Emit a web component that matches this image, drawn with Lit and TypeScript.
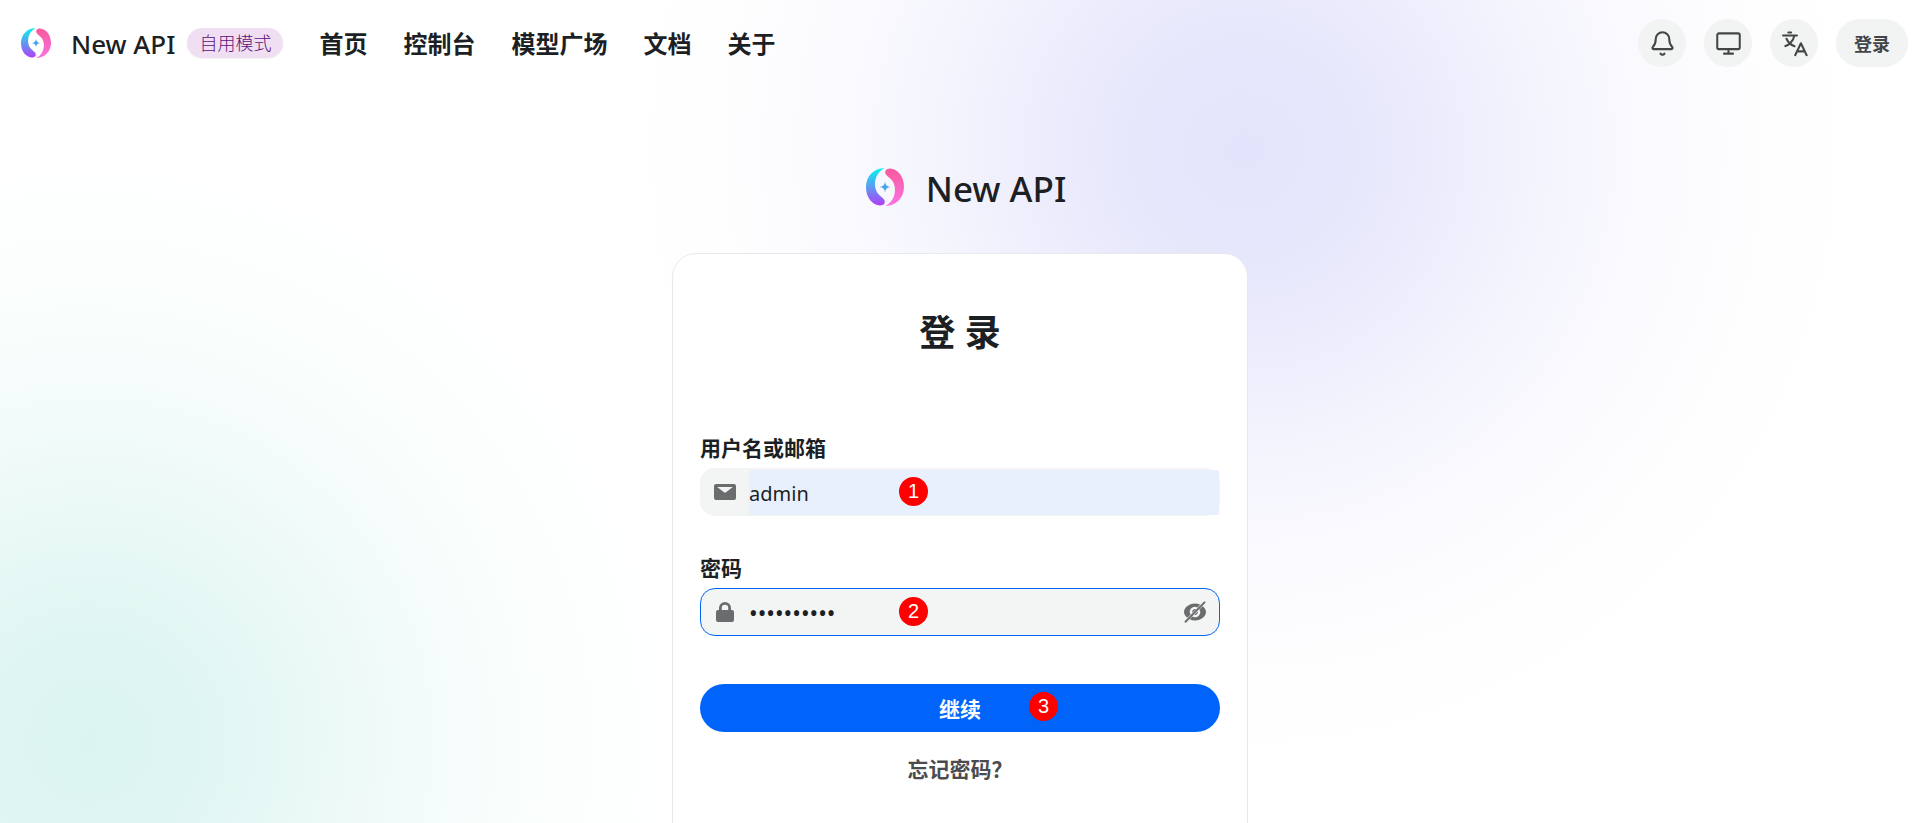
import { LitElement, html, css, svg } from "lit";
import { customElement, property, state } from "lit/decorators.js";

const base = css`
  *,
  *::before,
  *::after {
    box-sizing: border-box;
  }
  button,
  input {
    font: inherit;
    color: inherit;
    border: 0;
    margin: 0;
    padding: 0;
    background: none;
    outline: none;
  }
  button {
    cursor: pointer;
  }
  a {
    color: inherit;
    text-decoration: none;
  }
  svg {
    display: block;
  }
`;

@customElement("brand-logo")
export class BrandLogo extends LitElement {
  static styles = [
    base,
    css`
      :host {
        display: block;
        flex: none;
      }
      .mark {
        width: 100%;
        height: 100%;
      }
    `,
  ];

  render() {
    const blade =
      "M18.500 0C8 0 0 8.500 0 19C0 30 6.500 37 14 37.500C18 37.500 20 34.500 18 31.500C15.500 28 9 26 9 16.500C9 8.500 13 3 18.500 0Z";
    return html`<svg class="mark" viewBox="0 0 38 38" aria-hidden="true">
      <defs>
        <linearGradient id="cool" x1="0.6" y1="0" x2="0.6" y2="1">
          <stop offset="0" stop-color="#08f4ee" />
          <stop offset="0.5" stop-color="#5a9cf0" />
          <stop offset="1" stop-color="#b43cf8" />
        </linearGradient>
        <linearGradient id="warm" x1="0.5" y1="1" x2="0.5" y2="0">
          <stop offset="0" stop-color="#f75a9c" />
          <stop offset="1" stop-color="#fb72e2" />
        </linearGradient>
      </defs>
      <path fill="url(#cool)" d=${blade} />
      <path fill="url(#warm)" d=${blade} transform="rotate(180 19 19)" />
      <path
        fill="#4aa3ee"
        d="M19 13.500Q19.400 18.600 24.500 19Q19.400 19.400 19 24.500Q18.600 19.400 13.500 19Q18.600 18.600 19 13.500Z"
      />
    </svg>`;
  }
}

const bell = svg`<path d="M10.268 21a2 2 0 0 0 3.464 0" /><path d="M3.262 15.326A1 1 0 0 0 4 17h16a1 1 0 0 0 .74-1.673C19.410 13.956 18 12.499 18 8A6 6 0 0 0 6 8c0 4.499-1.411 5.956-2.738 7.326" />`;
const monitor = svg`<rect x="2" y="3" width="20" height="14" rx="1.5" /><path d="M12 17v4M8 21h8" />`;
const translate = svg`<path d="M6.500 2.300h2.500M1.800 4.900h12.400M11.800 5.200C11 9.300 7.500 13.200 3.900 14.300M4.900 7.800C6.300 11 8.800 13.300 12 14.500M12.600 22.400L17.700 11.800L22.800 22.400M14.200 19h7" />`;

@customElement("site-header")
export class SiteHeader extends LitElement {
  static styles = [
    base,
    css`
      :host {
        display: block;
      }
      .bar {
        display: flex;
        align-items: center;
        height: 86px;
        padding: 0 5px 0 21px;
      }
      .home {
        display: flex;
        align-items: center;
      }
      .logo {
        width: 30px;
        height: 30px;
        margin-right: 20px;
      }
      .name {
        font-size: 26px;
        line-height: 36px;
        font-weight: 500;
        padding-top: 2px;
      }
      .mode {
        margin-left: 12px;
        height: 30px;
        padding: 0 12px;
        border-radius: 15px;
        background: #f0dff3;
        color: #5c0f78;
        font-size: 18px;
        line-height: 30px;
        font-weight: 300;
        box-shadow: 0 1px 2px rgba(0, 0, 0, 0.06);
      }
      .nav {
        display: flex;
        gap: 36px;
        margin-left: 36px;
        padding-top: 2px;
        font-size: 24px;
        line-height: 36px;
        font-weight: 700;
      }
      .tools {
        display: flex;
        gap: 18px;
        margin-left: auto;
      }
      .tool {
        display: grid;
        place-items: center;
        min-width: 48px;
        height: 48px;
        border-radius: 24px;
        background: #f2f3f3;
        color: #444547;
      }
      .wide {
        padding: 0 18px;
        font-size: 18px;
        font-weight: 700;
      }
      .icon {
        width: 27px;
        height: 27px;
        fill: none;
        stroke: currentColor;
        stroke-width: 1.8;
        stroke-linecap: round;
        stroke-linejoin: round;
      }
    `,
  ];

  private links = ["首页", "控制台", "模型广场", "文档", "关于"];
  private tools = [
    { label: "通知", icon: bell },
    { label: "主题", icon: monitor },
    { label: "语言", icon: translate },
  ];

  render() {
    return html`<header class="bar">
      <a class="home" href="#">
        <brand-logo class="logo"></brand-logo>
        <span class="name">New API</span>
      </a>
      <span class="mode">自用模式</span>
      <nav class="nav">${this.links.map((l) => html`<a href="#">${l}</a>`)}</nav>
      <div class="tools">
        ${this.tools.map(
          (t) => html`<button class="tool" type="button" aria-label=${t.label}>
            <svg class="icon" viewBox="0 0 24 24">${t.icon}</svg>
          </button>`
        )}
        <button class="tool wide" type="button">登录</button>
      </div>
    </header>`;
  }
}

@customElement("step-mark")
export class StepMark extends LitElement {
  @property() n = "";
  static styles = css`
    :host {
      display: block;
      width: 29px;
      height: 29px;
      border-radius: 50%;
      background: #ff0000;
      color: #ffffff;
      font: 400 20px/29px "Liberation Sans", Arial, sans-serif;
      text-align: center;
    }
  `;
  render() {
    return html`${this.n}`;
  }
}

@customElement("login-card")
export class LoginCard extends LitElement {
  @state() private reveal = false;

  static styles = [
    base,
    css`
      :host {
        display: block;
        width: 100%;
        max-width: 576px;
      }
      .card {
        border: 1px solid #e8e9ea;
        border-radius: 24px;
        background: #ffffff;
        padding: 55px 27px 96px;
      }
      .title {
        margin: 0 0 76px;
        font-size: 36px;
        line-height: 48px;
        font-weight: 700;
        text-align: center;
      }
      .form {
        display: flex;
        flex-direction: column;
        font-size: 21px;
        line-height: 30px;
      }
      .field {
        display: flex;
        flex-direction: column;
        gap: 5px;
        margin-bottom: 37px;
      }
      .label {
        font-weight: 700;
      }
      .box {
        position: relative;
        display: flex;
        align-items: center;
        height: 48px;
        border: 1px solid transparent;
        border-radius: 15px;
        background: #f3f4f4;
      }
      .box.focus {
        border-color: #0064fa;
      }
      .lead {
        flex: none;
        display: grid;
        place-items: center;
        width: 48px;
        color: #6b6c6e;
      }
      .glyph {
        width: 24px;
        height: 24px;
        fill: currentColor;
      }
      .input {
        flex: 1;
        min-width: 0;
        height: 100%;
        padding-top: 2px;
        color: #1c1f23;
        font-size: 23px;
      }
      .input.filled {
        background: #e8f0fe;
        height: 45px;
        font-size: 20px;
      }
      .eye {
        flex: none;
        display: grid;
        place-items: center;
        width: 48px;
        height: 100%;
        color: #6b6c6e;
      }
      .step {
        position: absolute;
        top: 8px;
        left: 198px;
      }
      .submit {
        position: relative;
        height: 48px;
        margin-top: 11px;
        padding-top: 2px;
        border-radius: 24px;
        background: #0064fa;
        color: #ffffff;
        font-weight: 700;
      }
      .submit .step {
        left: 329px;
      }
      .forgot {
        align-self: center;
        margin-top: 22px;
        color: #4b4c4e;
        font-weight: 700;
      }
    `,
  ];

  render() {
    return html`<section class="card">
      <h1 class="title">登 录</h1>
      <form class="form" @submit=${(e: Event) => e.preventDefault()}>
        <div class="field">
          <label class="label" for="user">用户名或邮箱</label>
          <div class="box">
            <span class="lead">
              <svg class="glyph" viewBox="0 0 24 24" aria-hidden="true">
                <path
                  fill-rule="evenodd"
                  d="M3 4H21A2 2 0 0 1 23 6V18A2 2 0 0 1 21 20H3A2 2 0 0 1 1 18V6A2 2 0 0 1 3 4ZM4.200 7L11 12.200Q12 12.900 13 12.200L19.800 7Z"
                />
              </svg>
            </span>
            <input class="input filled" id="user" type="text" .value=${"admin"} />
            <step-mark class="step" n="1"></step-mark>
          </div>
        </div>
        <div class="field">
          <label class="label" for="pass">密码</label>
          <div class="box focus">
            <span class="lead">
              <svg class="glyph" viewBox="0 0 24 24" aria-hidden="true">
                <path
                  fill-rule="evenodd"
                  d="M6 10V8A6 6 0 0 1 18 8V10H19A2 2 0 0 1 21 12V20A2 2 0 0 1 19 22H5A2 2 0 0 1 3 20V12A2 2 0 0 1 5 10ZM8.800 10H15.200V8A3.200 3.200 0 0 0 8.800 8Z"
                />
              </svg>
            </span>
            <input
              class="input"
              id="pass"
              type=${this.reveal ? "text" : "password"}
              .value=${"admin12345"}
            />
            <button
              class="eye"
              type="button"
              aria-label="显示密码"
              @click=${() => (this.reveal = !this.reveal)}
            >
              <svg class="glyph" viewBox="0 0 24 24" aria-hidden="true">
                <path
                  d="M15.600 3.900A13 13 0 0 0 12 3.500C5.500 3.500 1 8 1 12C1 14 2.200 16.200 4.300 17.800L7.600 14.500A5 5 0 0 1 14.500 7.600L17.200 4.600ZM19.700 6.200L16.400 9.500A5 5 0 0 1 9.500 16.400L6.700 19.200A13 13 0 0 0 12 20.500C18.500 20.500 23 16 23 12C23 10 21.800 7.800 19.700 6.200Z"
                />
                <path d="M9.300 12.800A2.800 2.800 0 0 1 12.900 9.300ZM14.800 11.400A2.800 2.800 0 0 1 11.400 14.800Z" />
                <path
                  d="M2.500 21.800L21.500 2.400"
                  stroke="currentColor"
                  stroke-width="2"
                  stroke-linecap="round"
                />
              </svg>
            </button>
            <step-mark class="step" n="2"></step-mark>
          </div>
        </div>
        <button class="submit" type="submit">
          继续<step-mark class="step" n="3"></step-mark>
        </button>
        <a class="forgot" href="#">忘记密码？</a>
      </form>
    </section>`;
  }
}

@customElement("app-root")
export class AppRoot extends LitElement {
  static styles = [
    base,
    css`
      :host {
        display: block;
        height: 100vh;
        overflow: hidden;
        color: #1c1f23;
        font-family: "Noto Sans", "Noto Sans CJK SC", sans-serif;
        background:
          radial-gradient(
            circle 620px at 65% 150px,
            rgba(200, 200, 248, 0.5) 0%,
            rgba(200, 200, 248, 0.45) 16%,
            rgba(200, 200, 248, 0.34) 32%,
            rgba(200, 200, 248, 0.2) 48%,
            rgba(200, 200, 248, 0.1) 64%,
            rgba(200, 200, 248, 0.03) 82%,
            rgba(200, 200, 248, 0) 100%
          ),
          radial-gradient(
            circle 620px at 90px 90%,
            rgba(184, 234, 226, 0.5) 0%,
            rgba(184, 234, 226, 0.45) 16%,
            rgba(184, 234, 226, 0.34) 32%,
            rgba(184, 234, 226, 0.2) 48%,
            rgba(184, 234, 226, 0.1) 64%,
            rgba(184, 234, 226, 0.03) 82%,
            rgba(184, 234, 226, 0) 100%
          ),
          #ffffff;
      }
      .main {
        display: flex;
        flex-direction: column;
        align-items: center;
        padding: 77px 0 48px 7px;
      }
      .brand {
        display: flex;
        align-items: center;
        gap: 22px;
        margin-bottom: 42px;
        padding-left: 12px;
      }
      .logo {
        width: 38px;
        height: 38px;
      }
      .name {
        font-size: 35px;
        line-height: 44px;
        padding-top: 4px;
        font-weight: 500;
      }
    `,
  ];

  render() {
    return html`<site-header></site-header>
      <main class="main">
        <div class="brand">
          <brand-logo class="logo"></brand-logo>
          <span class="name">New API</span>
        </div>
        <login-card></login-card>
      </main>`;
  }
}
